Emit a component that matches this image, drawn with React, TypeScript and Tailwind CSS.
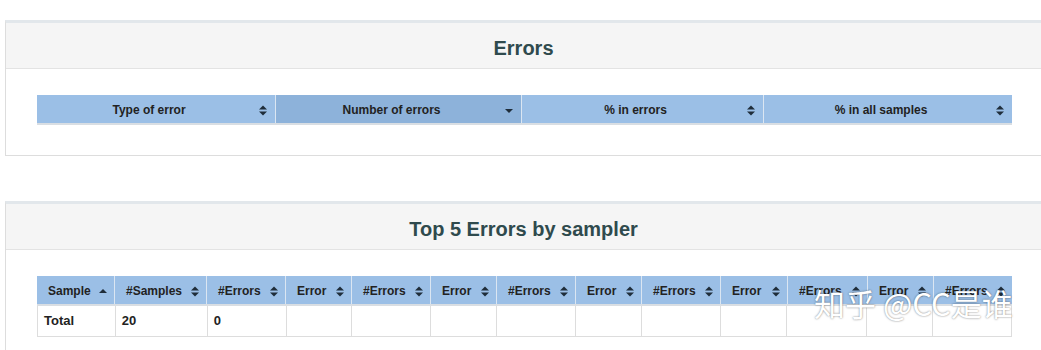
import type { ReactNode } from 'react'

type SortDir = 'both' | 'asc' | 'desc'

function SortIcon({ dir }: { dir: SortDir }) {
  if (dir === 'asc')
    return (
      <svg width="8" height="11" viewBox="0 0 8 11" className="shrink-0">
        <path d="M0 7 L4 3 L8 7 Z" fill="#1f2d3a" />
      </svg>
    )
  if (dir === 'desc')
    return (
      <svg width="8" height="11" viewBox="0 0 8 11" className="shrink-0">
        <path d="M0 4 L4 8 L8 4 Z" fill="#1f2d3a" />
      </svg>
    )
  return (
    <svg width="8" height="11" viewBox="0 0 8 11" className="shrink-0">
      <path d="M0 4.5 L4 0.5 L8 4.5 Z" fill="#1f2d3a" />
      <path d="M0 6.5 L4 10.5 L8 6.5 Z" fill="#1f2d3a" />
    </svg>
  )
}

function Panel({ title, children }: { title: string; children: ReactNode }) {
  return (
    <div className="ml-[5px] w-[1037px] border border-[#dddddd] border-t-[3px] border-t-[#e2e7eb] bg-white">
      <div className="h-[46px] pt-[4px] flex items-center justify-center bg-[#f5f5f5] border-b border-[#e3e3e3]">
        <h3 className="text-[20px] font-bold text-[#2f4a4d]">{title}</h3>
      </div>
      <div className="px-[30px] pt-[26px] pb-[30px]">{children}</div>
    </div>
  )
}

const errorCols: { label: string; width: string; dir: SortDir; bg: string }[] = [
  { label: 'Type of error', width: 'w-[238px]', dir: 'both', bg: 'bg-[#9bbfe6]' },
  { label: 'Number of errors', width: 'w-[246px]', dir: 'desc', bg: 'bg-[#8db2da]' },
  { label: '% in errors', width: 'w-[242px]', dir: 'both', bg: 'bg-[#9bbfe6]' },
  { label: '% in all samples', width: 'w-[249px]', dir: 'both', bg: 'bg-[#9bbfe6]' },
]

const topCols: { label: string; width: string; dir: SortDir }[] = [
  { label: 'Sample', width: 'w-[77px]', dir: 'asc' },
  { label: '#Samples', width: 'w-[92px]', dir: 'both' },
  { label: '#Errors', width: 'w-[79px]', dir: 'both' },
  { label: 'Error', width: 'w-[66px]', dir: 'both' },
  { label: '#Errors', width: 'w-[79px]', dir: 'both' },
  { label: 'Error', width: 'w-[66px]', dir: 'both' },
  { label: '#Errors', width: 'w-[79px]', dir: 'both' },
  { label: 'Error', width: 'w-[66px]', dir: 'both' },
  { label: '#Errors', width: 'w-[79px]', dir: 'both' },
  { label: 'Error', width: 'w-[67px]', dir: 'both' },
  { label: '#Errors', width: 'w-[80px]', dir: 'both' },
  { label: 'Error', width: 'w-[66px]', dir: 'both' },
  { label: '#Errors', width: 'w-[79px]', dir: 'both' },
]

const totalRow = ['Total', '20', '0', '', '', '', '', '', '', '', '', '', '']

export default function App() {
  return (
    <div className="relative w-[1041px] h-[350px] overflow-hidden bg-white pt-5 font-['Liberation_Sans',Arial,sans-serif] text-[#222]">
      <Panel title="Errors">
        <div className="flex w-[975px] ml-px h-[30px] border-b-2 border-[#d9dee3]">
          {errorCols.map((c, i) => (
            <div
              key={c.label}
              className={`${c.width} ${c.bg} relative flex items-center justify-center pt-[2px] pl-[6px] pr-[20px] text-[12px] font-bold ${i > 0 ? 'border-l border-[#dbe6f2]' : ''}`}
            >
              <span>{c.label}</span>
              <span className="absolute right-[8px] top-[10px]">
                <SortIcon dir={c.dir} />
              </span>
            </div>
          ))}
        </div>
      </Panel>

      <div className="h-[45px]" />

      <Panel title="Top 5 Errors by sampler">
        <div className="w-[975px] ml-px">
          <div className="flex h-[30px] bg-[#9bbfe6] border-b-2 border-[#d9dee3]">
            {topCols.map((c, i) => (
              <div
                key={i}
                className={`${c.width} flex items-center justify-between pt-[2px] pl-[11px] pr-[7px] text-[12px] font-bold ${i > 0 ? 'border-l border-[#dbe6f2]' : ''}`}
              >
                <span>{c.label}</span>
                <SortIcon dir={c.dir} />
              </div>
            ))}
          </div>
          <div className="flex h-[31px] border-b border-l border-r border-[#dddddd]">
            {topCols.map((c, i) => (
              <div
                key={i}
                className={`${c.width} flex items-center pl-[6px] text-[13px] font-bold ${i > 0 ? 'border-l border-[#dddddd]' : ''}`}
              >
                {totalRow[i]}
              </div>
            ))}
          </div>
        </div>
      </Panel>

      {/* 知乎 watermark */}
      <div className="absolute left-[814px] top-[287px] text-[31px] leading-none text-white whitespace-nowrap font-['Noto_Sans_CJK_SC',sans-serif] [text-shadow:0_0_2px_rgba(0,0,0,0.55)]">
        知乎 @CC是谁
      </div>
    </div>
  )
}
